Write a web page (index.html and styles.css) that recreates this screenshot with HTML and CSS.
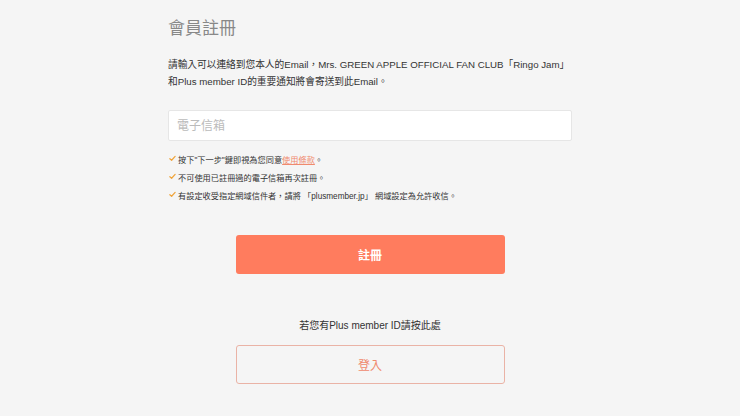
FILE: index.html
```html
<!DOCTYPE html>
<html lang="zh-Hant">
<head>
    <meta charset="UTF-8">
    <meta name="viewport" content="width=device-width, initial-scale=1.0">
    <title>會員註冊</title>
    <link rel="stylesheet" href="styles.css">
</head>
<body>
    <div class="register-container">
        <h1 class="title">會員註冊</h1>

        <p class="lead">請輸入可以連絡到您本人的Email，Mrs. GREEN APPLE OFFICIAL FAN CLUB「Ringo Jam」和Plus member ID的重要通知將會寄送到此Email。</p>

        <form id="register-form">
            <input type="email" id="email" class="email-input" placeholder="電子信箱">

            <ul class="notes">
                <li>
                    <svg class="check" viewBox="0 0 8 8"><path d="M1 4.2 L3 6 L7 1.6" fill="none" stroke="#f0a43a" stroke-width="1.4" stroke-linecap="round" stroke-linejoin="round"/></svg>
                    <span>按下"下一步"鍵即視為您同意<a href="#" class="terms">使用條款</a>。</span>
                </li>
                <li>
                    <svg class="check" viewBox="0 0 8 8"><path d="M1 4.2 L3 6 L7 1.6" fill="none" stroke="#f0a43a" stroke-width="1.4" stroke-linecap="round" stroke-linejoin="round"/></svg>
                    <span>不可使用已註冊過的電子信箱再次註冊。</span>
                </li>
                <li>
                    <svg class="check" viewBox="0 0 8 8"><path d="M1 4.2 L3 6 L7 1.6" fill="none" stroke="#f0a43a" stroke-width="1.4" stroke-linecap="round" stroke-linejoin="round"/></svg>
                    <span>有設定收受指定網域信件者，請將 「plusmember.jp」 網域設定為允許收信。</span>
                </li>
            </ul>

            <div class="button-container">
                <button type="button" class="btn-primary">註冊</button>
            </div>
        </form>

        <p class="login-hint">若您有Plus member ID請按此處</p>
        <div class="button-container">
            <button type="button" class="btn-outline">登入</button>
        </div>
    </div>
</body>
</html>
```

FILE: styles.css
```css
*, *::before, *::after {
    box-sizing: border-box;
}

body {
    font-family: "Liberation Sans", Arial, "Noto Sans CJK TC", sans-serif;
    background-color: #f5f5f5;
    color: #333;
    margin: 0;
    padding: 0;
}

.register-container {
    width: 404px;
    margin: 0 auto;
    padding-top: 18px;
}

.title {
    font-size: 17px;
    font-weight: normal;
    color: #888;
    margin: 0;
    line-height: 22px;
}

.lead {
    font-size: 9.7px;
    line-height: 17px;
    margin: 16px 0 0;
}

.email-input {
    display: block;
    width: 100%;
    height: 31px;
    margin-top: 20px;
    padding: 0 8px;
    border: 1px solid #e6e6e6;
    border-radius: 2px;
    background-color: white;
    font-family: inherit;
    font-size: 12px;
    color: #333;
}

.email-input::placeholder {
    color: #bbb;
}

.notes {
    list-style: none;
    margin: 11px 0 0;
    padding: 0;
}

.notes li {
    display: flex;
    align-items: flex-start;
    font-size: 8.2px;
    line-height: 18px;
}

.check {
    width: 7px;
    height: 7px;
    margin: 3px 2px 0 1px;
    flex-shrink: 0;
}

.terms {
    color: #f08a6e;
}

.button-container {
    display: flex;
    justify-content: center;
}

.btn-primary,
.btn-outline {
    width: 269px;
    height: 39px;
    border-radius: 3px;
    font-family: inherit;
    font-size: 12px;
    font-weight: bold;
    cursor: pointer;
}

.btn-primary {
    margin-top: 29px;
    background-color: #ff7c5e;
    color: white;
    border: none;
}

.btn-primary:hover {
    background-color: #f56c4d;
}

.login-hint {
    text-align: center;
    font-size: 10px;
    line-height: 14px;
    margin: 45px 0 0;
}

.btn-outline {
    margin-top: 12px;
    background-color: transparent;
    color: #f08a6e;
    border: 1px solid #eab3a6;
    font-weight: normal;
}
```
